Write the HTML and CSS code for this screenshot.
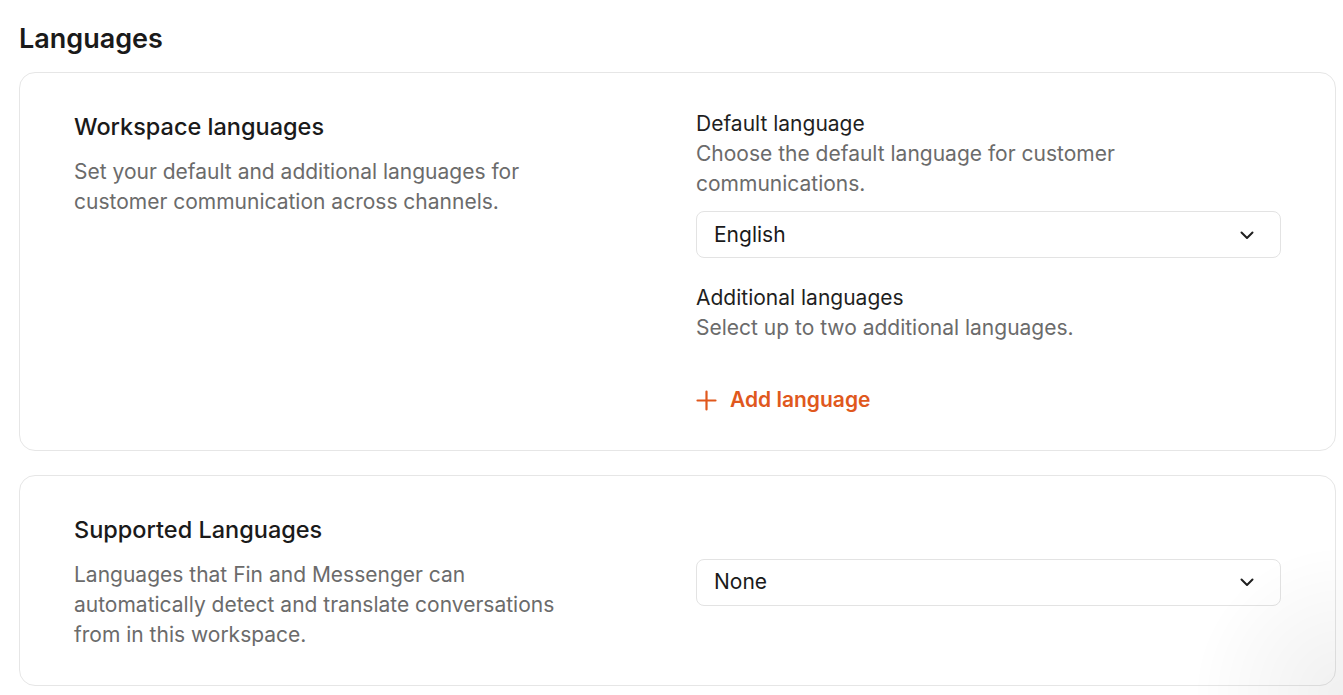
FILE: index.html
```html
<!DOCTYPE html>
<html lang="en">
  <head>
    <meta charset="utf-8">
    <title>Languages | Settings</title>
    <link rel="stylesheet" href="styles.css">
  </head>
  <body>
    <div class="page">
      <h1 class="page-title">Languages</h1>

      <section class="card">
        <div class="card-info">
          <h2>Workspace languages</h2>
          <p class="muted">Set your default and additional languages for customer communication across channels.</p>
        </div>
        <div class="card-fields">
          <div class="field">
            <div class="field-label">Default language</div>
            <p class="muted">Choose the default language for customer communications.</p>
            <button class="select" type="button">
              <span>English</span>
              <svg width="18" height="18" viewBox="0 0 18 18" fill="none"><path d="M3.5 6.5l5.5 5.5 5.5-5.5" stroke="#1f1f1f" stroke-width="2" stroke-linecap="round" stroke-linejoin="round"/></svg>
            </button>
          </div>
          <div class="field">
            <div class="field-label">Additional languages</div>
            <p class="muted">Select up to two additional languages.</p>
            <button class="add-link" type="button">
              <svg width="21" height="21" viewBox="0 0 21 21" fill="none"><path d="M10.5 1.5v18M1.5 10.5h18" stroke="currentColor" stroke-width="2.2" stroke-linecap="round"/></svg>
              <span>Add language</span>
            </button>
          </div>
        </div>
      </section> <!-- .card -->

      <section class="card card-centered">
        <div class="card-info">
          <h2>Supported Languages</h2>
          <p class="muted">Languages that Fin and Messenger can automatically detect and translate conversations from in this workspace.</p>
        </div>
        <div class="card-fields">
          <button class="select" type="button">
            <span>None</span>
            <svg width="18" height="18" viewBox="0 0 18 18" fill="none"><path d="M3.5 6.5l5.5 5.5 5.5-5.5" stroke="#1f1f1f" stroke-width="2" stroke-linecap="round" stroke-linejoin="round"/></svg>
          </button>
        </div>
      </section> <!-- .card -->
    </div> <!-- .page -->
  </body>
</html>
```

FILE: styles.css
```css
* {
  margin: 0;
  padding: 0;
  box-sizing: border-box; }

html {
  font-family: Inter, "Noto Sans", sans-serif; }

body {
  background: #fff;
  color: #1a1a1a;
  font-size: 21px;
  line-height: 30px;
  min-height: 695px;
  overflow: hidden; }

/* soft shade in the lower right corner, drawn over the cards */
body::after {
  content: "";
  position: fixed;
  right: 0;
  bottom: 0;
  width: 220px;
  height: 220px;
  pointer-events: none;
  background: radial-gradient(circle at 100% 100%, rgba(0, 0, 0, 0.06) 0, rgba(0, 0, 0, 0) 150px); }

.page {
  padding: 21px 7px 0 19px; }

.page-title {
  font-size: 27px;
  font-weight: 600;
  line-height: 36px;
  margin-bottom: 15px; }

.card {
  display: grid;
  grid-template-columns: 1fr 1fr;
  column-gap: 37px;
  background: #fff;
  border: 1px solid #e6e6e6;
  border-radius: 16px;
  padding: 36px 54px 35px;
  margin-bottom: 24px; }

.card-centered {
  align-items: center;
  padding: 38px 54px 35px; }

.card-info h2 {
  font-size: 23.5px;
  font-weight: 500;
  line-height: 32px;
  margin-bottom: 14px; }

.card .card-info {
  padding-top: 2px; }

.card-centered .card-info {
  padding-top: 0; }

.card-info .muted {
  max-width: 500px; }

.muted {
  color: #6b6b6b; }

.field-label {
  color: #1f1f1f; }

.select {
  display: flex;
  align-items: center;
  justify-content: space-between;
  width: 100%;
  height: 47px;
  margin: 12px 0 25px;
  padding: 0 24px 0 17px;
  background: #fff;
  border: 1px solid #e3e3e3;
  border-radius: 8px;
  font: inherit;
  color: #1a1a1a;
  cursor: pointer; }

.card-centered .select {
  margin: 0; }

.add-link {
  display: flex;
  align-items: center;
  gap: 13px;
  margin-top: 42px;
  background: none;
  border: none;
  font: inherit;
  font-weight: 600;
  color: #e0581d;
  cursor: pointer; }
```
